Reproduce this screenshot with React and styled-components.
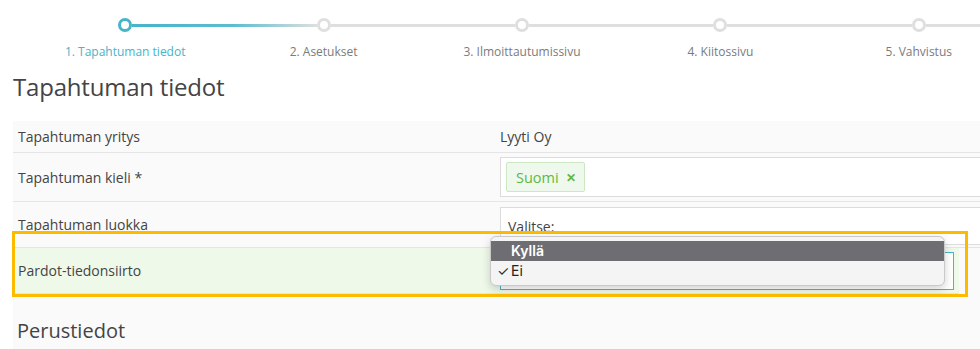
import React from "react";
import styled, { createGlobalStyle } from "styled-components";

const Global = createGlobalStyle`
  html, body { margin: 0; padding: 0; background: #ffffff; overflow: hidden; }
  body { font-family: "Open Sans", "Noto Sans", Arial, sans-serif; color: #444; }
  * { box-sizing: border-box; }
`;

const STEP = 198.4;

const Page = styled.div`
  width: 1200px;
  padding-top: 18px;
`;

const Track = styled.div`
  display: flex;
  align-items: center;
  margin-left: ${26 + STEP / 2 - 7}px;
`;

const Circle = styled.div`
  flex: none;
  width: 14px;
  height: 14px;
  border-radius: 50%;
  border: 3px solid ${(p) => (p.$active ? "#46b4c9" : "#dfdfdf")};
  background: #fff;
`;

const Line = styled.div`
  flex: none;
  width: ${STEP - 14}px;
  height: 3px;
  background: ${(p) =>
    p.$active
      ? "linear-gradient(to right, #46b4c9 0%, #5cbdd0 55%, #dfdfdf 100%)"
      : "#dfdfdf"};
`;

const Labels = styled.div`
  display: grid;
  grid-template-columns: repeat(5, ${STEP}px);
  margin-left: 26px;
  margin-top: 12px;
`;

const Label = styled.div`
  text-align: center;
  font-size: 12px;
  line-height: 16px;
  color: ${(p) => (p.$active ? "#46b4c9" : "#7b7b7b")};
`;

const Title = styled.h1`
  margin: 12px 0 0 13px;
  font-size: 24px;
  line-height: 30px;
  font-weight: 400;
  color: #444;
  letter-spacing: -0.2px;
`;

const Panel = styled.div`
  margin: 19px 0 0 13px;
  background: #fafafa;
  width: 1100px;
  padding-bottom: 30px;
`;

const Row = styled.div`
  position: relative;
  display: grid;
  grid-template-columns: 487px 1fr;
  align-items: center;
  min-height: ${(p) => p.$h}px;
  border-bottom: 1px solid #e5e5e5;
  background: ${(p) => (p.$green ? "#eff9ea" : "transparent")};
  width: ${(p) => (p.$w ? `${p.$w}px` : "auto")};
`;

const FieldLabel = styled.div`
  padding-left: 5px;
  font-size: 14px;
  color: #444;
`;

const Value = styled.div`
  font-size: 14px;
  color: #444;
`;

const Box = styled.div`
  position: relative;
  display: flex;
  align-items: center;
  align-self: ${(p) => (p.$top ? "start" : "center")};
  margin-top: ${(p) => p.$mt || 0}px;
  width: ${(p) => (p.$w ? `${p.$w}px` : "auto")};
  height: ${(p) => p.$h}px;
  border: 1px solid ${(p) => (p.$focus ? "#46b4c9" : "#dcdcdc")};
  background: #fff;
  padding: 0 7px 0 ${(p) => p.$pl || 7}px;
  font-size: 14px;
  color: #444;
`;

const Tag = styled.span`
  display: inline-flex;
  align-items: center;
  gap: 7px;
  height: 30px;
  padding: 0 8px 0 9px;
  background: #eff8ec;
  border: 1px solid #cbe8c3;
  border-radius: 2px;
  color: #5bb847;
  font-size: 14.5px;
`;

const TagX = styled.span`
  font-weight: 700;
  font-size: 12px;
`;

const Highlight = styled.div`
  position: absolute;
  left: -1px;
  top: -17px;
  width: 956px;
  height: 66px;
  border: 3px solid #fdbb00;
  pointer-events: none;
`;

const Menu = styled.div`
  position: absolute;
  left: -11px;
  top: -17px;
  width: 455px;
  padding: 4px 0;
  background: #f4f4f4;
  border: 1px solid #c9c9c9;
  border-radius: 6px;
  box-shadow: 0 3px 9px rgba(0, 0, 0, 0.18);
  font-family: Inter, "Liberation Sans", Arial, sans-serif;
  z-index: 2;
`;

const MenuItem = styled.div`
  position: relative;
  height: 20px;
  line-height: 20px;
  padding-left: 20px;
  font-size: 14px;
  font-weight: ${(p) => (p.$hover ? 600 : 400)};
  color: ${(p) => (p.$hover ? "#fff" : "#222")};
  background: ${(p) => (p.$hover ? "#6e6d72" : "transparent")};
`;

const Check = styled.span`
  position: absolute;
  left: 6px;
  top: 0;
  font-size: 14px;
  color: #333;
`;

const SubTitle = styled.h2`
  margin: 24px 0 0 4px;
  font-size: 20px;
  line-height: 26px;
  font-weight: 400;
  color: #444;
`;

const steps = [
  "1. Tapahtuman tiedot",
  "2. Asetukset",
  "3. Ilmoittautumissivu",
  "4. Kiitossivu",
  "5. Vahvistus",
];

export default function App() {
  return (
    <Page>
      <Global />
      <Track>
        {[...steps, "6"].map((s, i) => (
          <React.Fragment key={s}>
            <Circle $active={i === 0} />
            <Line $active={i === 0} />
          </React.Fragment>
        ))}
      </Track>
      <Labels>
        {steps.map((s, i) => (
          <Label key={s} $active={i === 0}>
            {s}
          </Label>
        ))}
      </Labels>
      <Title>Tapahtuman tiedot</Title>
      <Panel>
        <Row $h={32}>
          <FieldLabel>Tapahtuman yritys</FieldLabel>
          <Value>Lyyti Oy</Value>
        </Row>
        <Row $h={49}>
          <FieldLabel>Tapahtuman kieli *</FieldLabel>
          <Box $h={40} $pl={5}>
            <Tag>
              Suomi <TagX>✕</TagX>
            </Tag>
          </Box>
        </Row>
        <Row $h={46}>
          <FieldLabel>Tapahtuman luokka</FieldLabel>
          <Box $h={38} $top $mt={5}>
            Valitse:
          </Box>
        </Row>
        <Row $h={46} $green $w={946}>
          <Highlight />
          <FieldLabel>Pardot-tiedonsiirto</FieldLabel>
          <Box $h={38} $focus $w={454}>
            <Menu>
              <MenuItem $hover>Kyllä</MenuItem>
              <MenuItem>
                <Check>✓</Check>Ei
              </MenuItem>
            </Menu>
          </Box>
        </Row>
        <SubTitle>Perustiedot</SubTitle>
      </Panel>
    </Page>
  );
}
